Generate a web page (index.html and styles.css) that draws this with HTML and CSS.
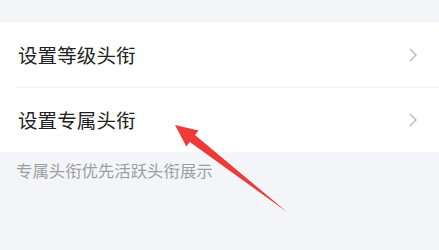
FILE: index.html
```html
<!DOCTYPE html>
<html lang="zh-CN">
<head>
    <meta charset="UTF-8">
    <title>头衔设置</title>
    <link rel="stylesheet" href="styles.css">
</head>
<body>
    <div class="page">
        <div class="list">
            <div class="list-item">
                <span class="item-title">设置等级头衔</span>
                <svg class="chevron" viewBox="0 0 8 14" width="8" height="14"><path d="M1 1 L7 7 L1 13" /></svg>
            </div>
            <div class="list-item">
                <span class="item-title">设置专属头衔</span>
                <svg class="chevron" viewBox="0 0 8 14" width="8" height="14"><path d="M1 1 L7 7 L1 13" /></svg>
            </div>
        </div>
        <p class="note">专属头衔优先活跃头衔展示</p>

        <!-- red pointer drawn over the list -->
        <svg class="pointer" viewBox="0 0 439 250" width="439" height="250">
            <polygon points="175,125 198.5,130.6 195,135 287,212 189.8,142 186.3,146.4" />
        </svg>
    </div>
</body>
</html>
```

FILE: styles.css
```css
* {
    margin: 0;
    padding: 0;
    box-sizing: border-box;
}

body {
    background: #f4f5f8;
    font-family: "Noto Sans CJK SC", "Noto Sans", sans-serif;
    width: 439px;
    height: 250px;
    overflow: hidden;
}

.page {
    position: relative;
    padding-top: 22px;
    height: 250px;
}

.list {
    background: #fff;
}

.list-item {
    display: flex;
    align-items: center;
    justify-content: space-between;
    height: 65px;
    padding: 0 22px 0 18px;
    position: relative;
}

.list-item + .list-item::before {
    content: '';
    position: absolute;
    top: 0;
    left: 16px;
    right: 0;
    height: 1px;
    background: #f1f1f3;
}

.item-title {
    font-size: 19.5px;
    color: #222;
    letter-spacing: 0.1px;
}

.chevron {
    fill: none;
    stroke: #b8b8bc;
    stroke-width: 1.4;
}

.note {
    padding: 6px 16px 0;
    font-size: 16.4px;
    line-height: 24px;
    color: #9c9ea6;
}

.pointer {
    position: absolute;
    left: 0;
    top: 0;
    fill: #ef3a3a;
}
```
